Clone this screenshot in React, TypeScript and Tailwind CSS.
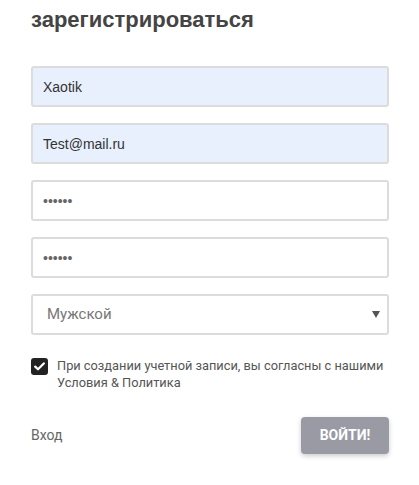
const fieldBase =
  "h-[41px] w-full rounded-[3px] border-2 border-[#dcdcdc] px-[10px] text-[14px] text-[#333] outline-none font-['Liberation_Sans',Arial,sans-serif]";

const Register = () => {
  return (
    <div className="min-h-[485px] w-[419px] bg-white pl-[31px] pt-[6px] font-['Roboto',sans-serif]">
      <div className="w-[358px]">
        <h2 className="text-[22px] font-bold leading-[28px] text-[#444] font-['Liberation_Sans',Arial,sans-serif]">
          зарегистрироваться
        </h2>

        {/* Form fields */}
        <form className="mt-[32px] flex flex-col gap-[16px]">
          <input className={`${fieldBase} bg-[#e8f0fe]`} defaultValue="Xaotik" />
          <input className={`${fieldBase} bg-[#e8f0fe]`} defaultValue="Test@mail.ru" />
          <input type="password" className={`${fieldBase} bg-white text-[11px] text-[#666]`} defaultValue="123456" />
          <input type="password" className={`${fieldBase} bg-white text-[11px] text-[#666]`} defaultValue="123456" />
          <div className="relative">
            <select
              className={`${fieldBase} appearance-none bg-white pl-[14px] text-[15px] text-[#777] font-['Roboto',sans-serif]`}
              defaultValue="m"
            >
              <option value="m">Мужской</option>
              <option value="f">Женский</option>
            </select>
            <span className="pointer-events-none absolute right-[9px] top-[17px] h-0 w-0 border-x-[4px] border-t-[7px] border-x-transparent border-t-[#555]" />
          </div>
        </form>

        {/* Terms agreement */}
        <label className="mt-[22px] flex items-start gap-[9px]">
          <span className="mt-[1px] flex h-[17px] w-[17px] shrink-0 items-center justify-center rounded-[3px] bg-[#222]">
            <svg width="11" height="9" viewBox="0 0 11 9" fill="none">
              <path d="M1.2 4.6 L4 7.3 L9.8 1.4" stroke="white" strokeWidth="2.2" strokeLinecap="round" strokeLinejoin="round" />
            </svg>
          </span>
          <span className="text-[12.8px] leading-[17px] text-[#555]">
            При создании учетной записи, вы согласны с нашими
            <br />
            Условия &amp; Политика
          </span>
        </label>

        {/* Footer */}
        <div className="mt-[26px] flex items-center justify-between">
          <a className="text-[14px] text-[#666]">Вход</a>
          <button className="h-[37px] w-[88px] rounded-[4px] bg-[#9a9aa5] text-[14px] font-bold text-white shadow-[0_2px_5px_rgba(0,0,0,0.2)]">
            ВОЙТИ!
          </button>
        </div>
      </div>
    </div>
  );
};

export default function App() {
  return <Register />;
}
